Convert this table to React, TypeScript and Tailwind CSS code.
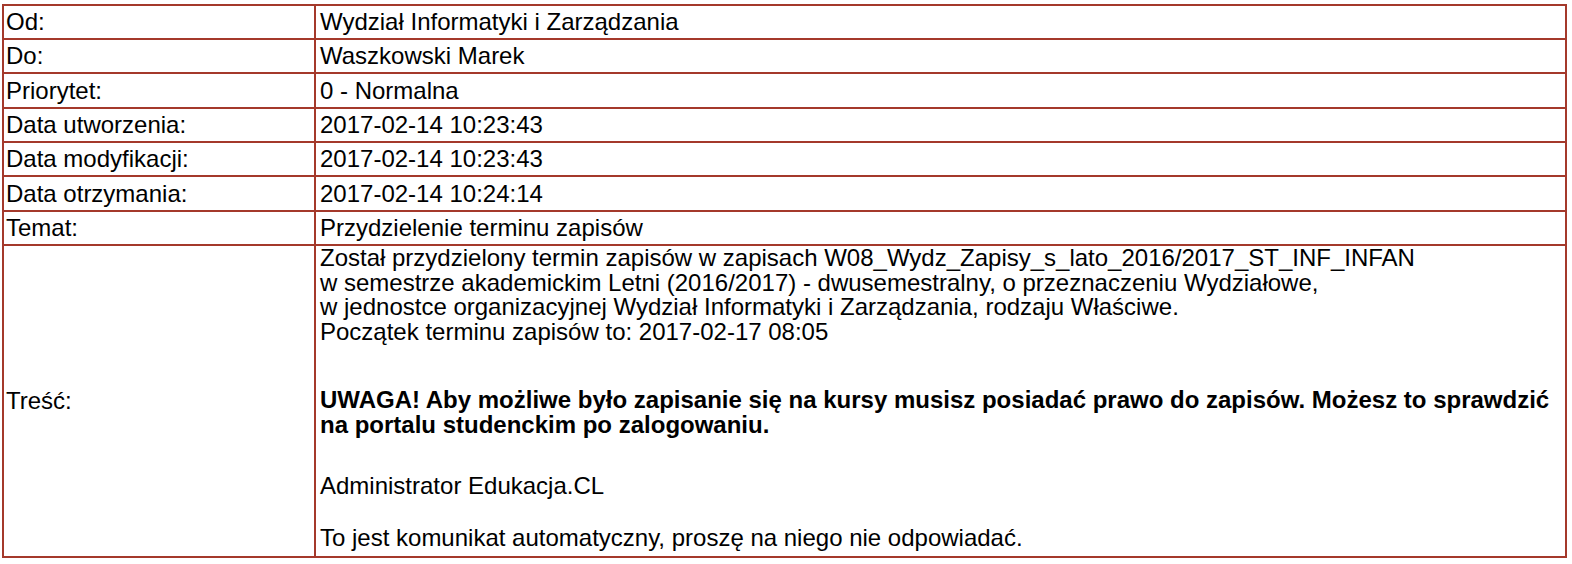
const ROWS: [string, string][] = [
  ["Od:", "Wydział Informatyki i Zarządzania"],
  ["Do:", "Waszkowski Marek"],
  ["Priorytet:", "0 - Normalna"],
  ["Data utworzenia:", "2017-02-14 10:23:43"],
  ["Data modyfikacji:", "2017-02-14 10:23:43"],
  ["Data otrzymania:", "2017-02-14 10:24:14"],
  ["Temat:", "Przydzielenie terminu zapisów"],
]

// row heights alternate so the lines fall on the reference's pixel rows
const ROW_H = ["h-[32px]", "h-[32px]", "h-[33px]", "h-[32px]", "h-[32px]", "h-[33px]", "h-[32px]"]

export default function App() {
  return (
    <div className="min-h-[564px] bg-white pt-[4px] pl-[2px] font-['Liberation_Sans',Arial,sans-serif] text-[24px] text-black">
      <div className="grid w-[1565px] grid-cols-[310px_1fr] gap-[2px] bg-[#a4392b] p-[2px]">
        {ROWS.map(([label, value], i) => (
          <div key={label} className="contents">
            <div className={`flex items-center bg-white pl-[2px] ${ROW_H[i]}`}>{label}</div>
            <div className={`flex items-center bg-white pl-[4px] ${ROW_H[i]}`}>{value}</div>
          </div>
        ))}
        <div className="flex h-[310px] items-center bg-white pl-[2px]">Treść:</div>
        <div className="h-[310px] bg-white pl-[4px] leading-[24.7px]">
          <div className="whitespace-nowrap">
            Został przydzielony termin zapisów w zapisach W08_Wydz_Zapisy_s_lato_2016/2017_ST_INF_INFAN
            <br />
            w semestrze akademickim Letni (2016/2017) - dwusemestralny, o przeznaczeniu Wydziałowe,
            <br />
            w jednostce organizacyjnej Wydział Informatyki i Zarządzania, rodzaju Właściwe.
            <br />
            Początek terminu zapisów to: 2017-02-17 08:05
          </div>
          <p className="mt-[43px] whitespace-nowrap font-bold">
            UWAGA! Aby możliwe było zapisanie się na kursy musisz posiadać prawo do zapisów. Możesz to sprawdzić
            <br />
            na portalu studenckim po zalogowaniu.
          </p>
          <p className="mt-[37px]">Administrator Edukacja.CL</p>
          <p className="mt-[27px]">To jest komunikat automatyczny, proszę na niego nie odpowiadać.</p>
        </div>
      </div>
    </div>
  )
}
